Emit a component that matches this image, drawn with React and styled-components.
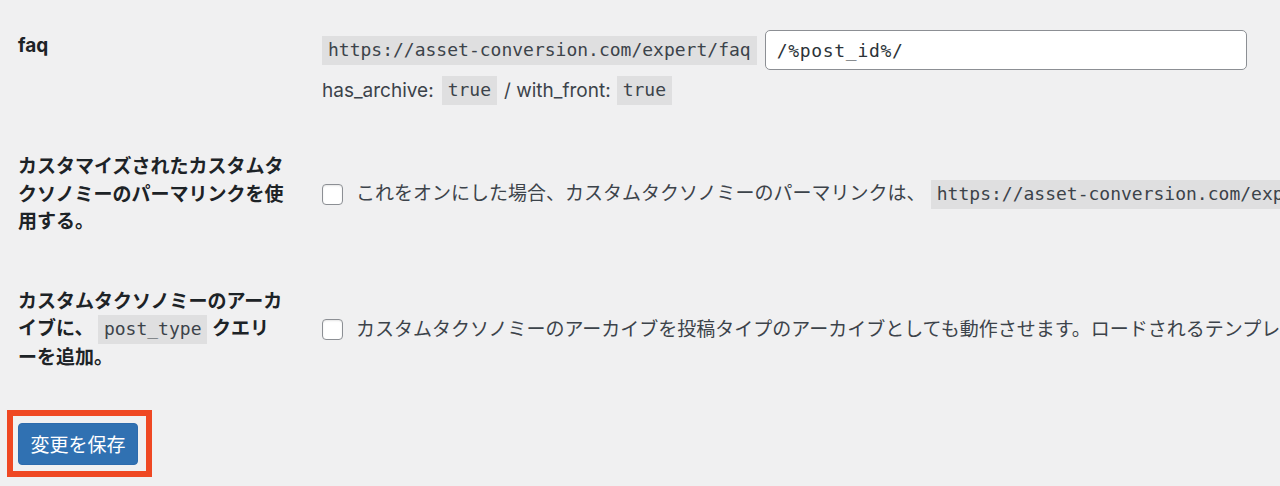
import React from "react";
import styled, { createGlobalStyle } from "styled-components";

const GlobalStyle = createGlobalStyle`
  html, body {
    margin: 0;
    padding: 0;
    background: #f0f0f1;
    overflow: hidden;
  }
  body {
    font-family: "Inter", "Noto Sans CJK JP", sans-serif;
    color: #3c434a;
  }
`;

const sans = `"Inter", "Noto Sans CJK JP", sans-serif`;
const mono = `"DejaVu Sans Mono", "Noto Sans CJK JP", monospace`;

const Page = styled.div`
  width: 1280px;
  height: 486px;
  box-sizing: border-box;
  padding-top: 6px;
  overflow: hidden;
  background: #f0f0f1;
`;

const FormTable = styled.div`
  display: flex;
  flex-direction: column;
  padding-left: 18px;
`;

const Row = styled.div`
  display: grid;
  grid-template-columns: 268px 1fr;
  column-gap: 36px;
  align-items: ${(p) => (p.$center ? "center" : "start")};
`;

const Label = styled.div`
  padding: 26px 0;
  font-family: ${sans};
  font-size: 19px;
  font-weight: 700;
  line-height: 27.5px;
  color: #1d2327;
`;

const Cell = styled.div`
  padding: ${(p) => p.$pad || "0"};
  font-family: ${sans};
  font-size: 19px;
  color: #3c434a;
  white-space: nowrap;
  min-width: 0;
`;

const Line = styled.div`
  display: flex;
  align-items: center;
  gap: ${(p) => p.$gap || "0"};
  margin-top: ${(p) => p.$mt || "0"};
  height: ${(p) => p.$h || "auto"};
`;

const Code = styled.code`
  display: inline-block;
  font-family: ${mono};
  font-size: 18px;
  line-height: 22px;
  padding: 3px 6px 4px;
  margin: ${(p) => p.$m || "0"};
  background: rgba(0, 0, 0, 0.07);
  color: #3c434a;
  vertical-align: middle;
  font-weight: 400;
`;

const TextInput = styled.input`
  box-sizing: border-box;
  width: 482px;
  height: 40px;
  padding: 0 11px;
  line-height: 38px;
  border: 1px solid #8c8f94;
  border-radius: 5px;
  background: #fff;
  font-family: ${mono};
  font-size: 18px;
  letter-spacing: 0.7px;
  color: #2c3338;
  outline: none;
`;

const Text = styled.span`
  letter-spacing: ${(p) => p.$ls || "0"};
`;

const CheckLine = styled.label`
  display: flex;
  align-items: center;
  gap: 13px;
  line-height: 28px;
`;

const Checkbox = styled.span`
  flex: none;
  box-sizing: border-box;
  width: 21px;
  height: 21px;
  border: 1px solid #8c8f94;
  border-radius: 4px;
  background: #fff;
  box-shadow: inset 0 1px 2px rgba(0, 0, 0, 0.1);
`;

const Submit = styled.div`
  padding: 12px 0 0 7px;
`;

const Highlight = styled.div`
  display: inline-block;
  border: 6px solid #ef4823;
  padding: 7px 8px 6px 5px;
`;

const Button = styled.button`
  display: block;
  height: 42px;
  padding: 0 11.5px;
  border: 1px solid #2d6bad;
  border-radius: 4px;
  background: #3071b2;
  color: #fff;
  font-family: ${sans};
  font-size: 19px;
  cursor: pointer;
`;

export default function App() {
  return (
    <>
      <GlobalStyle />
      <Page>
        <FormTable>
          <Row>
            <Label>faq</Label>
            <Cell $pad="24px 0 22px">
              <Line $gap="8px">
                <Code>https://asset-conversion.com/expert/faq</Code>
                <TextInput defaultValue="/%post_id%/" />
              </Line>
              <Line $mt="5px" $h="30px">
                <Text>has_archive:</Text>
                <Code $m="0 7px 0 8px">true</Code>
                <Text>/ with_front:</Text>
                <Code $m="0 0 0 6px">true</Code>
              </Line>
            </Cell>
          </Row>

          <Row $center>
            <Label>
              カスタマイズされたカスタムタクソノミーのパーマリンクを使用する。
            </Label>
            <Cell>
              <CheckLine>
                <Checkbox />
                <span>
                  これをオンにした場合、カスタムタクソノミーのパーマリンクは、{" "}
                  <Code>https://asset-conversion.com/expert/faq/%faq_category%/</Code>
                </span>
              </CheckLine>
            </Cell>
          </Row>

          <Row $center>
            <Label>
              カスタムタクソノミーのアーカイブに、 <Code>post_type</Code> クエリーを追加。
            </Label>
            <Cell>
              <CheckLine>
                <Checkbox />
                <span>
                  カスタムタクソノミーのアーカイブを投稿タイプのアーカイブとしても動作させます。ロードされるテンプレートは投稿タイプのアーカイブテンプレートになります。
                </span>
              </CheckLine>
            </Cell>
          </Row>
        </FormTable>

        <Submit>
          <Highlight>
            <Button type="button">変更を保存</Button>
          </Highlight>
        </Submit>
      </Page>
    </>
  );
}
